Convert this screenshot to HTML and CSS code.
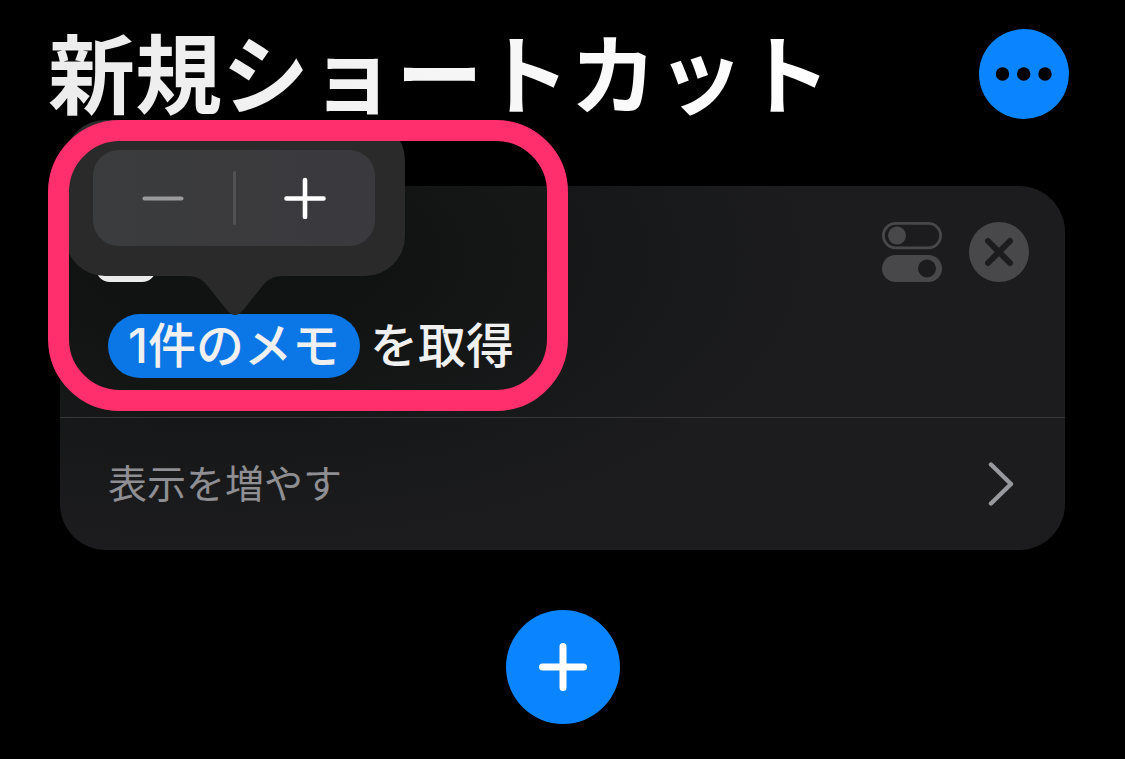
FILE: index.html
```
<!DOCTYPE html>
<html lang="ja">
<head>
    <meta charset="UTF-8">
    <meta name="viewport" content="width=device-width, initial-scale=1.0">
    <title>新規ショートカット</title>
    <link rel="stylesheet" href="styles.css">
</head>
<body>
    <header class="header">
        <h1 class="title">新規ショートカット</h1>
        <button class="more-button" type="button" aria-label="その他">
            <svg viewBox="0 0 90 90" width="90" height="90">
                <circle cx="23.5" cy="45" r="6.7"/>
                <circle cx="44.7" cy="45" r="6.7"/>
                <circle cx="66" cy="45" r="6.7"/>
            </svg>
        </button>
    </header>

    <main class="main">
        <section class="card">
            <div class="action">
                <div class="action-bar">
                    <div class="app-icon"></div>
                    <div class="action-tools">
                        <button class="icon-button" type="button" aria-label="オプション">
                            <svg viewBox="0 0 60 60" width="60" height="60">
                                <rect x="1.4" y="1.4" width="57.2" height="24.4" rx="12.2" fill="none" stroke="#48484a" stroke-width="2.8"/>
                                <circle cx="15" cy="13.6" r="9" fill="#48484a"/>
                                <rect x="0" y="33" width="60" height="27" rx="13.5" fill="#48484a"/>
                                <circle cx="45" cy="46.5" r="9" fill="#1c1c1e"/>
                            </svg>
                        </button>
                        <button class="icon-button" type="button" aria-label="削除">
                            <svg viewBox="0 0 60 60" width="60" height="60">
                                <circle cx="30" cy="30" r="30" fill="#48484a"/>
                                <path d="M19 19L41 41M41 19L19 41" stroke="#1c1c1e" stroke-width="6" stroke-linecap="round"/>
                            </svg>
                        </button>
                    </div>
                </div>
                <div class="action-text">
                    <button class="token" type="button">1件のメモ</button>
                    <span>を取得</span>
                </div>
            </div>
            <button class="show-more" type="button">
                <span class="show-more-label">表示を増やす</span>
                <svg viewBox="0 0 26 46" width="26" height="46" fill="none" stroke="#98989f" stroke-width="4.4" stroke-linecap="round" stroke-linejoin="round">
                    <path d="M3 3.5L23 23L3 42.5"/>
                </svg>
            </button>

            <!-- stepper popover -->
            <div class="popover">
                <div class="stepper">
                    <button class="step" type="button" aria-label="減らす">
                        <svg viewBox="0 0 42 42" width="42" height="42" stroke="#9b9b9e" stroke-width="4" stroke-linecap="round">
                            <path d="M2.5 21.5H39.5"/>
                        </svg>
                    </button>
                    <div class="step-divider"></div>
                    <button class="step" type="button" aria-label="増やす">
                        <svg viewBox="0 0 42 42" width="42" height="42" stroke="#fff" stroke-width="4.6" stroke-linecap="round">
                            <path d="M2.5 21.500H39.5M21 3V40"/>
                        </svg>
                    </button>
                </div>
                <svg class="popover-arrow" viewBox="0 0 96 39" width="96" height="39">
                    <path d="M0 0C12 0 17 5 23 13L39 33C43 37.500 45 39 48 39C51 39 53 37.500 57 33L73 13C79 5 84 0 96 0Z" fill="#2a2a2a"/>
                </svg>
            </div>
            <div class="highlight"></div>
        </section>

        <button class="add-button" type="button" aria-label="アクションを追加">
            <svg viewBox="0 0 48 48" width="48" height="48" stroke="#fff" stroke-width="7" stroke-linecap="round">
                <path d="M3.500 24H44.500M24 3.500V44.500"/>
            </svg>
        </button>
    </main>
</body>
</html>
```

FILE: styles.css
```
* {
    box-sizing: border-box;
}
body {
    margin: 0;
    background: #000;
    color: #fff;
    font-family: Inter, "Noto Sans CJK JP", sans-serif;
}
button {
    padding: 0;
    border: none;
    background: none;
    color: inherit;
    font: inherit;
    cursor: pointer;
}
svg {
    display: block;
}
.header {
    display: flex;
    align-items: flex-start;
    justify-content: space-between;
    padding: 29px 56px 0 48px;
    margin-bottom: 61px;
}
.title {
    margin: 0;
    font-size: 87px;
    font-weight: 700;
    line-height: 96px;
    white-space: nowrap;
    background: linear-gradient(to right, #ececec, #fff);
    background-clip: text;
    color: transparent;
}
.more-button {
    flex: none;
    border-radius: 50%;
    background: #0a84ff;
}
.main {
    display: flex;
    flex-direction: column;
    align-items: center;
    gap: 60px;
    padding: 0 60px 35px;
}
.card {
    position: relative;
    align-self: stretch;
    border-radius: 46px;
    background: radial-gradient(ellipse 580px 290px at 175px 70px, #111312 25%, #1c1c1e);
}
.action {
    padding: 36px 36px 39px;
    border-bottom: 1px solid #38383a;
}
.action-bar {
    display: flex;
    justify-content: space-between;
    margin-bottom: 32px;
}
.app-icon {
    width: 60px;
    height: 60px;
    border-radius: 14px;
    background: #ebebeb;
}
.action-tools {
    display: flex;
    gap: 27px;
}
.action-text {
    display: flex;
    align-items: center;
    gap: 10px;
    padding: 0 12px;
    color: #f0f0f0;
    font-size: 48px;
    font-weight: 500;
    line-height: 64px;
    white-space: nowrap;
}
.token {
    padding: 0 20px;
    border-radius: 32px;
    background: #0b77e6;
}
.show-more {
    display: flex;
    align-items: center;
    justify-content: space-between;
    width: 100%;
    height: 132px;
    padding: 0 51px 0 48px;
    color: #8e8e93;
    font-size: 39px;
    font-weight: 400;
}
.show-more-label {
    padding-bottom: 6px;
}

/* popover */
.popover {
    position: absolute;
    top: -66px;
    left: 5px;
    padding: 30px 30px 30px 28px;
    border-radius: 40px;
    background: #2a2a2a;
}
.popover-arrow {
    position: absolute;
    top: 100%;
    left: 50%;
    margin-left: -48px;
}
.stepper {
    display: flex;
    align-items: center;
    width: 282px;
    height: 96px;
    border-radius: 26px;
    background: linear-gradient(to right, #3b3c3d, #3a393e);
}
.step {
    flex: 1;
    display: flex;
    justify-content: center;
}
.step-divider {
    width: 3px;
    height: 54px;
    border-radius: 2px;
    background: #525256;
}
.highlight {
    position: absolute;
    top: -66px;
    left: -12px;
    width: 520px;
    height: 291px;
    border: 21px solid #ff2f6d;
    border-radius: 72px;
    pointer-events: none;
}

.add-button {
    display: flex;
    align-items: center;
    justify-content: center;
    width: 114px;
    height: 114px;
    border-radius: 50%;
    background: #0a84ff;
}
```
